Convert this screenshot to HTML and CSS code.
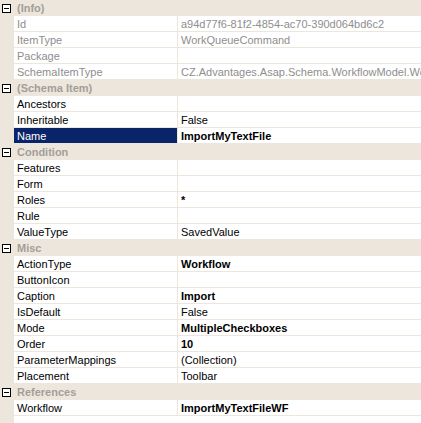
FILE: index.html
```html
<!DOCTYPE html>
<html>
<head>
<meta charset="utf-8">
<link rel="stylesheet" href="styles.css">
</head>
<body>
<div class="grid">
  <div class="cat"><div class="margin"><span class="box"></span></div><div class="cat-name">(Info)</div></div>
  <div class="row ro"><div class="margin"></div><div class="label">Id</div><div class="value">a94d77f6-81f2-4854-ac70-390d064bd6c2</div></div>
  <div class="row ro"><div class="margin"></div><div class="label">ItemType</div><div class="value">WorkQueueCommand</div></div>
  <div class="row ro"><div class="margin"></div><div class="label">Package</div><div class="value"></div></div>
  <div class="row ro"><div class="margin"></div><div class="label">SchemaItemType</div><div class="value">CZ.Advantages.Asap.Schema.WorkflowModel.WorkQueueCommand</div></div>

  <div class="cat"><div class="margin"><span class="box"></span></div><div class="cat-name">(Schema Item)</div></div>
  <div class="row"><div class="margin"></div><div class="label">Ancestors</div><div class="value"></div></div>
  <div class="row"><div class="margin"></div><div class="label">Inheritable</div><div class="value">False</div></div>
  <div class="row sel"><div class="margin"></div><div class="label">Name</div><div class="value bold">ImportMyTextFile</div></div>

  <div class="cat"><div class="margin"><span class="box"></span></div><div class="cat-name">Condition</div></div>
  <div class="row"><div class="margin"></div><div class="label">Features</div><div class="value"></div></div>
  <div class="row"><div class="margin"></div><div class="label">Form</div><div class="value"></div></div>
  <div class="row"><div class="margin"></div><div class="label">Roles</div><div class="value bold">*</div></div>
  <div class="row"><div class="margin"></div><div class="label">Rule</div><div class="value"></div></div>
  <div class="row"><div class="margin"></div><div class="label">ValueType</div><div class="value">SavedValue</div></div>

  <div class="cat"><div class="margin"><span class="box"></span></div><div class="cat-name">Misc</div></div>
  <div class="row"><div class="margin"></div><div class="label">ActionType</div><div class="value bold">Workflow</div></div>
  <div class="row"><div class="margin"></div><div class="label">ButtonIcon</div><div class="value"></div></div>
  <div class="row"><div class="margin"></div><div class="label">Caption</div><div class="value bold">Import</div></div>
  <div class="row"><div class="margin"></div><div class="label">IsDefault</div><div class="value">False</div></div>
  <div class="row"><div class="margin"></div><div class="label">Mode</div><div class="value bold">MultipleCheckboxes</div></div>
  <div class="row"><div class="margin"></div><div class="label">Order</div><div class="value bold">10</div></div>
  <div class="row"><div class="margin"></div><div class="label">ParameterMappings</div><div class="value">(Collection)</div></div>
  <div class="row"><div class="margin"></div><div class="label">Placement</div><div class="value">Toolbar</div></div>

  <div class="cat"><div class="margin"><span class="box"></span></div><div class="cat-name">References</div></div>
  <div class="row"><div class="margin"></div><div class="label">Workflow</div><div class="value bold">ImportMyTextFileWF</div></div>
  <div class="rest"><div class="margin"></div><div class="empty"></div></div>
</div>
</body>
</html>
```

FILE: styles.css
```css
html, body {
  margin: 0;
  padding: 0;
  background: #ffffff;
}
.grid {
  width: 421px;
  height: 423px;
  overflow: hidden;
  display: flex;
  flex-direction: column;
  font-family: "Liberation Sans", Arial, sans-serif;
  font-size: 11px;
  color: #000000;
}
.margin {
  width: 14px;
  flex: 0 0 14px;
  background: #ede6dd;
  position: relative;
}
.cat, .row {
  display: flex;
  height: 16px;
  flex: 0 0 16px;
}
.cat {
  background: #ede6dd;
}
.cat-name {
  padding-left: 3px;
  padding-top: 1px;
  line-height: 14px;
  font-weight: bold;
  color: #a29e99;
  white-space: nowrap;
}
.box {
  position: absolute;
  left: 2px;
  top: 4px;
  width: 7px;
  height: 7px;
  border: 1px solid #000000;
  background: #ffffff;
}
.box::after {
  content: "";
  position: absolute;
  left: 1px;
  top: 3px;
  width: 5px;
  height: 1px;
  background: #000000;
}
.label {
  width: 160px;
  flex: 0 0 160px;
  padding-left: 3px;
  padding-top: 1px;
  border-right: 1px solid #ede6dd;
  border-bottom: 1px solid #ede6dd;
  line-height: 14px;
  white-space: nowrap;
  overflow: hidden;
  background: #ffffff;
}
.value {
  flex: 1 1 auto;
  padding-left: 3px;
  padding-top: 1px;
  border-bottom: 1px solid #ede6dd;
  line-height: 14px;
  white-space: nowrap;
  overflow: hidden;
  background: #ffffff;
}
.ro .label, .ro .value {
  color: #8e8e8e;
}
.bold {
  font-weight: bold;
}
.sel .label {
  background: #0a246a;
  color: #ffffff;
}
.rest {
  display: flex;
  flex: 1 1 auto;
}
.empty {
  flex: 1 1 auto;
  background: #ffffff;
}
```
